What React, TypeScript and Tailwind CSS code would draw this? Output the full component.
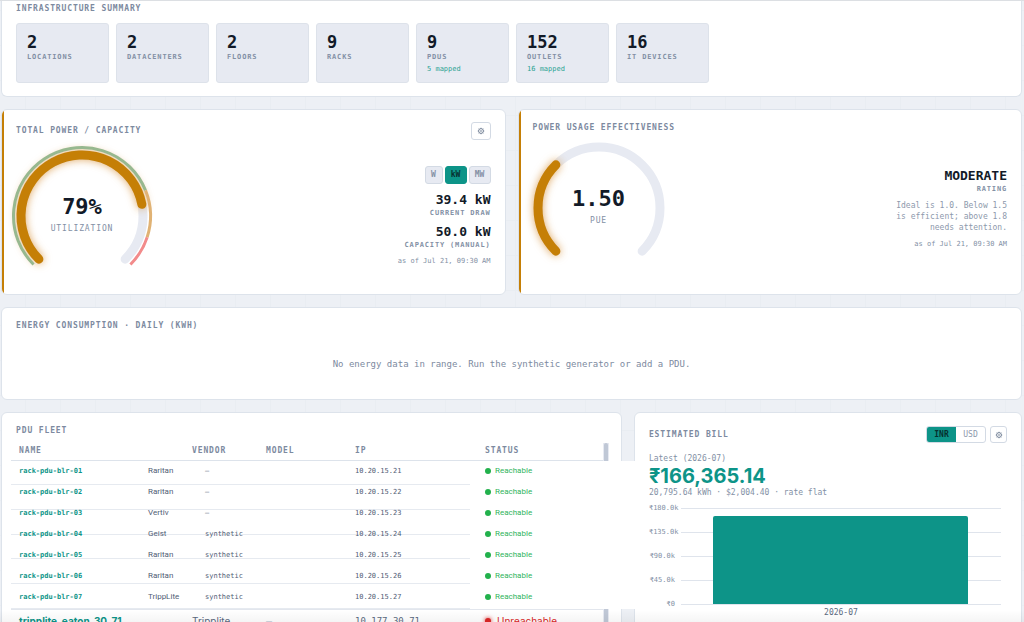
import React from "react";

const TITLE = "text-[8px] leading-[12px] font-bold tracking-[0.11em] text-[#7d8aa0] uppercase";
const LABEL = "text-[7px] leading-[10px] font-bold tracking-[0.12em] text-[#8390a5] uppercase";
const CARD = "bg-white border border-[#dde3eb] rounded-md";
const ACCENT =
  "relative overflow-hidden before:absolute before:inset-y-0 before:left-0 before:w-0.5 before:bg-[#c57f06]";

const stats = [
  { value: "2", label: "Locations" },
  { value: "2", label: "Datacenters" },
  { value: "2", label: "Floors" },
  { value: "9", label: "Racks" },
  { value: "9", label: "PDUs", note: "5 mapped" },
  { value: "152", label: "Outlets", note: "16 mapped" },
  { value: "16", label: "IT Devices" },
];

const pdus = [
  { name: "rack-pdu-blr-01", vendor: "Raritan", model: "—", ip: "10.20.15.21" },
  { name: "rack-pdu-blr-02", vendor: "Raritan", model: "—", ip: "10.20.15.22" },
  { name: "rack-pdu-blr-03", vendor: "Vertiv", model: "—", ip: "10.20.15.23" },
  { name: "rack-pdu-blr-04", vendor: "Geist", model: "synthetic", ip: "10.20.15.24" },
  { name: "rack-pdu-blr-05", vendor: "Raritan", model: "synthetic", ip: "10.20.15.25" },
  { name: "rack-pdu-blr-06", vendor: "Raritan", model: "synthetic", ip: "10.20.15.26" },
  { name: "rack-pdu-blr-07", vendor: "TrippLite", model: "synthetic", ip: "10.20.15.27" },
];

const ticks = ["₹180.0k", "₹135.0k", "₹90.0k", "₹45.0k", "₹0"];

// Point on a circle, degrees clockwise from the top
const point = (cx: number, cy: number, r: number, deg: number) => {
  const a = (deg * Math.PI) / 180;
  return `${(cx + r * Math.sin(a)).toFixed(2)} ${(cy - r * Math.cos(a)).toFixed(2)}`;
};

const arc = (cx: number, cy: number, r: number, from: number, to: number) =>
  `M${point(cx, cy, r, from)} A${r} ${r} 0 ${to - from > 180 ? 1 : 0} 1 ${point(cx, cy, r, to)}`;

const Gear: React.FC = () => (
  <svg viewBox="0 0 16 16" className="size-2" fill="none" stroke="#66758c">
    <circle cx="8" cy="8" r="4.8" strokeWidth="1.8" />
    <circle cx="8" cy="8" r="1.2" strokeWidth="1.2" />
    <path
      d="M8 1.5v1.8M8 12.7v1.8M1.5 8h1.8M12.7 8h1.8M3.4 3.4l1 1M11.6 11.6l1 1M3.4 12.6l1-1M11.6 4.4l1-1"
      strokeWidth="1.5"
    />
  </svg>
);

type GaugeProps = { value: string; label: string; end: number; zones?: boolean };

const Gauge: React.FC<GaugeProps> = ({ value, label, end, zones }) => (
  <div className="relative h-[130px] w-[152px]">
    <svg viewBox="0 0 152 130" className="h-full w-full overflow-visible" fill="none">
      <path d={arc(76, 74, 61, -135, 135)} stroke="#e7eaf2" strokeWidth="9" strokeLinecap="round" />
      <path
        d={arc(76, 74, 61, -135, end)}
        stroke="#c57f06"
        strokeWidth="9"
        strokeLinecap="round"
        className="drop-shadow-[0_0_4px_rgba(210,130,30,0.7)]"
      />
      {zones && (
        <>
          <path d={arc(76, 74, 68.5, -135, 68)} stroke="#97b88f" strokeWidth="3" />
          <path d={arc(76, 74, 68.5, 68, 108)} stroke="#e0b274" strokeWidth="3" />
          <path d={arc(76, 74, 68.5, 108, 135)} stroke="#f28b8b" strokeWidth="3" />
        </>
      )}
    </svg>
    <div className="absolute inset-0 flex flex-col items-center pt-[53px]">
      <span className="text-[22px] leading-6 font-bold text-[#121a28]">{value}</span>
      <span className="mt-1 text-[8px] leading-[12px] tracking-[0.11em] text-[#8390a5]">{label}</span>
    </div>
  </div>
);

const PduTable: React.FC = () => (
  <table className="w-full table-fixed border-collapse text-left">
    <colgroup>
      <col className="w-[181px]" />
      <col className="w-[74px]" />
      <col className="w-[89px]" />
      <col className="w-[130px]" />
      <col />
    </colgroup>
    <thead>
      <tr className={`${TITLE} h-[17px] border-b border-[#dde3eb]`}>
        <th className="pl-2">Name</th>
        <th>Vendor</th>
        <th>Model</th>
        <th>IP</th>
        <th>Status</th>
      </tr>
    </thead>
    <tbody>
      <tr>
        <td colSpan={5} className="p-0">
          <div className="relative h-[148px]">
            {/* Row rules have their own rhythm behind the rows */}
            <div className="absolute inset-y-0 left-0 flex w-[459px] flex-col">
              {[0, 1, 2, 3, 4, 5].map((i) => (
                <div key={i} className="flex-1 border-b border-[#e6eaf0]" />
              ))}
            </div>
            {/* Blank strip running over the scrollbar and the gap between the cards */}
            <div className="absolute inset-y-0 left-full z-10 w-11 bg-white" />
            <table className="relative w-full table-fixed text-[7px] leading-[10px] text-[#4f5d75]">
              <colgroup>
                <col className="w-[137px]" />
                <col className="w-[57px]" />
                <col className="w-[150px]" />
                <col className="w-[130px]" />
                <col />
              </colgroup>
              <tbody>
                {pdus.map((pdu) => (
                  <tr key={pdu.name} className="h-[21px]">
                    <td className="pl-2">
                      <a href="#" className="font-bold text-[#0d9488]">
                        {pdu.name}
                      </a>
                    </td>
                    <td className="font-[Roboto,sans-serif] text-[8px]">{pdu.vendor}</td>
                    <td>{pdu.model}</td>
                    <td>{pdu.ip}</td>
                    <td>
                      <div className="flex items-center gap-1 font-[Roboto,sans-serif] text-[8px] text-[#2fb45c]">
                        <span className="size-1.5 rounded-full bg-[#22b14c]" />
                        Reachable
                      </div>
                    </td>
                  </tr>
                ))}
              </tbody>
            </table>
          </div>
        </td>
      </tr>
      <tr className="h-6 border-t border-[#e2e6ed] text-[10px] leading-[12px] text-[#5b6980]">
        <td className="pl-2">
          <a href="#" className="font-[Inter,sans-serif] font-bold text-[#0d9488]">
            tripplite_eaton_30_71
          </a>
        </td>
        <td className="font-[Inter,sans-serif]">Tripplite</td>
        <td className="text-[#c5ccd8]">—</td>
        <td className="text-[9px]">10.177.30.71</td>
        <td>
          <div className="flex items-center gap-1.5 font-[Inter,sans-serif] text-[#dc2626]">
            <span className="size-1.5 rounded-full bg-[#dc2626] shadow-[0_0_4px_#dc2626]" />
            Unreachable
          </div>
        </td>
      </tr>
    </tbody>
  </table>
);

const BillChart: React.FC = () => (
  <div className="-mt-0.5 pr-1.5">
    <div className="relative">
      {ticks.map((tick) => (
        <div key={tick} className="flex h-6 items-center gap-1.5">
          <span className="w-[26px] text-right text-[7px] leading-[10px] whitespace-nowrap text-[#8390a5]">
            {tick}
          </span>
          <span className="h-px flex-1 bg-[#dfe4ec]" />
        </div>
      ))}
      <div className="absolute top-5 right-[33px] bottom-3 left-16 rounded-t-xs bg-[#0d9488]" />
    </div>
    <div className="-mt-2 pl-8 text-center text-[8px] leading-[10px] text-[#5b6980]">2026-07</div>
  </div>
);

const App: React.FC = () => {
  return (
    <div className="relative h-screen overflow-hidden border-t border-[#dcdfe3] bg-[#edf0f5] bg-[linear-gradient(#e9edf2_1px,transparent_1px),linear-gradient(90deg,#e9edf2_1px,transparent_1px)] bg-size-[35px_35px] bg-position-[25px_9px] pr-0.5 pl-px font-['DejaVu_Sans_Mono',monospace]">
      <div className="flex flex-col gap-3">
        {/* Infrastructure summary */}
        <section className={`${CARD} rounded-t-none border-t-0 px-3.5 pt-0.5 pb-[13px]`}>
          <h2 className={TITLE}>Infrastructure Summary</h2>
          <div className="mt-2 flex gap-[7px]">
            {stats.map((s) => (
              <div
                key={s.label}
                className="h-[60px] w-[93px] rounded-[3px] border border-[#dde2ea] bg-[#e7eaf2] px-2.5 pt-2"
              >
                <div className="text-[17px] leading-5 font-bold text-[#121a28]">{s.value}</div>
                <div className={LABEL}>{s.label}</div>
                {s.note && <div className="mt-0.5 text-[7px] leading-[10px] text-[#2ba393]">{s.note}</div>}
              </div>
            ))}
          </div>
        </section>

        {/* Gauges */}
        <div className="grid grid-cols-2 gap-3">
          <section className={`${CARD} ${ACCENT} h-[186px] px-3.5 pt-3`}>
            <div className="flex items-center justify-between">
              <h2 className={TITLE}>Total Power / Capacity</h2>
              <button
                aria-label="Capacity settings"
                className="flex h-[18px] w-5 items-center justify-center rounded-[3px] border border-[#d3dae4]"
              >
                <Gear />
              </button>
            </div>
            <div className="flex items-start justify-between">
              <div className="-ml-2.5 pt-0.5">
                <Gauge value="79%" label="UTILIZATION" end={79} zones />
              </div>
              <div className="flex flex-col items-end pt-[26px] text-right">
                <div className="flex gap-0.5 text-[8px] leading-[10px] font-bold text-[#8390a5]">
                  <button className="h-[18px] w-[18px] rounded-[3px] border border-[#d3dae4] bg-[#e7eaf2]">W</button>
                  <button className="h-[18px] w-[22px] rounded-[3px] border border-[#0d9488] bg-[#0d9488] text-[#06302f]">
                    kW
                  </button>
                  <button className="h-[18px] w-[22px] rounded-[3px] border border-[#d3dae4] bg-[#e7eaf2]">MW</button>
                </div>
                <div className="mt-2 text-[13px] leading-4 font-bold text-[#121a28]">39.4 kW</div>
                <div className={LABEL}>Current Draw</div>
                <div className="mt-1.5 text-[13px] leading-4 font-bold text-[#121a28]">50.0 kW</div>
                <div className={LABEL}>Capacity (Manual)</div>
                <div className="mt-1.5 text-[7px] leading-[10px] text-[#8390a5]">as of Jul 21, 09:30 AM</div>
              </div>
            </div>
          </section>

          <section className={`${CARD} ${ACCENT} h-[186px] px-3.5 pt-3`}>
            <h2 className={TITLE}>Power Usage Effectiveness</h2>
            <div className="flex items-start justify-between">
              <div className="-ml-2.5">
                <Gauge value="1.50" label="PUE" end={-45} />
              </div>
              <div className="flex flex-col items-end pt-[34px] text-right">
                <div className="text-[13px] leading-4 font-bold text-[#121a28]">MODERATE</div>
                <div className={LABEL}>Rating</div>
                <p className="mt-1.5 w-[112px] text-[8px] leading-[11px] text-[#8d99ac]">
                  Ideal is 1.0. Below 1.5 is efficient; above 1.8 needs attention.
                </p>
                <div className="mt-1.5 text-[7px] leading-[10px] text-[#8390a5]">as of Jul 21, 09:30 AM</div>
              </div>
            </div>
          </section>
        </div>

        {/* Energy */}
        <section className={`${CARD} h-[93px] px-3.5 pt-3`}>
          <h2 className={TITLE}>Energy Consumption · Daily (kWh)</h2>
          <p className="mt-[26px] text-center text-[9px] leading-[12px] text-[#7d8aa0]">
            No energy data in range. Run the synthetic generator or add a PDU.
          </p>
        </section>

        {/* Fleet and bill */}
        <div className="grid grid-cols-[1.6fr_1fr] gap-3">
          <section className={`${CARD} pt-3 pr-3 pb-3 pl-[9px]`}>
            <h2 className={`${TITLE} pl-[5px]`}>PDU Fleet</h2>
            <div className="mt-1.5 flex">
              <div className="min-w-0 flex-1">
                <PduTable />
              </div>
              <div className="w-1.5 bg-[#e7eaf2] px-px">
                <div className="h-full rounded-full bg-[#c0c8d6]" />
              </div>
            </div>
          </section>

          <section className={`${CARD} px-3.5 pt-[13px]`}>
            <div className="flex items-center justify-between">
              <h2 className={TITLE}>Estimated Bill</h2>
              <div className="flex gap-1">
                <div className="flex h-[17px] overflow-hidden rounded-[3px] border border-[#d3dae4] text-[8px] leading-[10px]">
                  <button className="w-[29px] bg-[#0d9488] font-bold text-[#06302f]">INR</button>
                  <button className="w-[29px] text-[#8d99ac]">USD</button>
                </div>
                <button
                  aria-label="Bill settings"
                  className="flex size-[17px] items-center justify-center rounded-[3px] border border-[#d3dae4]"
                >
                  <Gear />
                </button>
              </div>
            </div>
            <div className="mt-[11px] text-[8px] leading-[10px] text-[#8390a5]">Latest (2026-07)</div>
            <div className="font-[Inter,sans-serif] text-[20px] leading-6 font-bold text-[#0d9488]">
              ₹166,365.14
            </div>
            <div className="text-[8px] leading-[10px] text-[#8390a5]">20,795.64 kWh · $2,004.40 · rate flat</div>
            <BillChart />
          </section>
        </div>
      </div>
      {/* Scroll shade */}
      <div className="pointer-events-none absolute inset-x-0 bottom-0 z-20 h-3 bg-linear-to-t from-black/4 to-transparent" />
    </div>
  );
};

export default App;
